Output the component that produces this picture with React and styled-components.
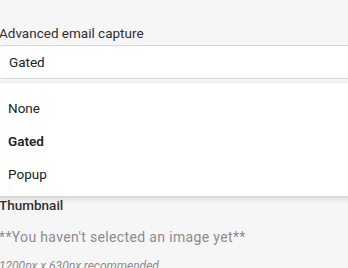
import styled, { createGlobalStyle } from "styled-components";

const GlobalStyle = createGlobalStyle`
  html, body {
    margin: 0;
    padding: 0;
    background: #f6f6f7;
    overflow: hidden;
  }
  body {
    font-family: Roboto, "Liberation Sans", sans-serif;
    -webkit-font-smoothing: antialiased;
  }
`;

const Page = styled.div`
  width: 360px;
  height: 268px;
  margin-left: -2px;
  padding-top: 24px;
  box-sizing: border-box;
  display: flex;
  flex-direction: column;
`;

const Field = styled.div`
  display: flex;
  flex-direction: column;
`;

const Label = styled.label`
  font-size: 13.5px;
  line-height: 18px;
  color: #303030;
  margin-bottom: 3px;
  padding-left: 1px;
`;

const SelectBox = styled.div`
  height: 34px;
  box-sizing: border-box;
  border: 1px solid #d9d9d9;
  border-radius: 5px;
  background: #fff;
  display: flex;
  align-items: center;
  padding-left: 10px;
  font-size: 13.5px;
  color: #202223;
`;

const Menu = styled.ul`
  list-style: none;
  margin: 3px 0 0;
  padding: 8px 0 6px;
  background: #fff;
  border-top: 1px solid #ebebeb;
  box-shadow: 0 3px 6px rgba(0, 0, 0, 0.12), 0 1px 2px rgba(0, 0, 0, 0.08);
  position: relative;
  z-index: 1;
`;

const Option = styled.li`
  height: 33px;
  display: flex;
  align-items: center;
  padding-left: 10px;
  font-size: 13.5px;
  color: #202223;
  font-weight: ${(p) => (p.$selected ? 600 : 400)};
`;

const Section = styled.div`
  display: flex;
  flex-direction: column;
  padding-left: 1px;
`;

const SectionTitle = styled.div`
  font-size: 13.5px;
  line-height: 18px;
  color: #303030;
  font-weight: 500;
`;

const Hint = styled.div`
  font-size: 14px;
  letter-spacing: 0.35px;
  line-height: 18px;
  color: #8c8c8c;
  margin-top: 14px;
`;

const Small = styled.div`
  font-size: 12px;
  font-style: italic;
  line-height: 16px;
  color: #8c8c8c;
  margin-top: 12px;
`;

export default function App() {
  return (
    <>
      <GlobalStyle />
      <Page>
        <Field>
          <Label>Advanced email capture</Label>
          <SelectBox>Gated</SelectBox>
        </Field>
        <Menu>
          <Option>None</Option>
          <Option $selected>Gated</Option>
          <Option>Popup</Option>
        </Menu>
        <Section>
          <SectionTitle>Thumbnail</SectionTitle>
          <Hint>**You haven't selected an image yet**</Hint>
          <Small>1200px x 630px recommended</Small>
        </Section>
      </Page>
    </>
  );
}
